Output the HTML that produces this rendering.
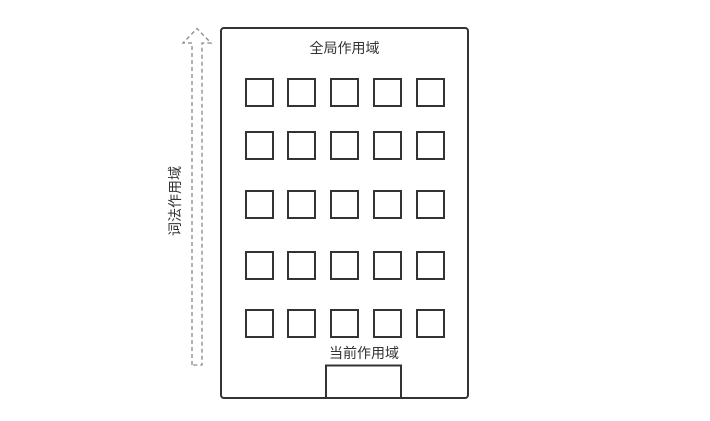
<!DOCTYPE html>
<html><head><meta charset="utf-8"><style>
html,body{margin:0;padding:0;background:#fff;width:710px;height:421px;overflow:hidden}
svg text{font-family:"Liberation Sans","Noto Sans CJK SC",sans-serif;font-size:14px;fill:#333}
</style></head><body>
<svg width="710" height="421" xmlns="http://www.w3.org/2000/svg">
<rect x="221" y="28" width="247" height="370" rx="3" fill="none" stroke="#333" stroke-width="2"/>
<text x="344.5" y="53" text-anchor="middle">全局作用域</text>
<g fill="none" stroke="#333" stroke-width="2">
<rect x="246" y="79" width="27" height="27"/><rect x="288" y="79" width="27" height="27"/><rect x="331" y="79" width="27" height="27"/><rect x="374" y="79" width="27" height="27"/><rect x="417" y="79" width="27" height="27"/>
<rect x="246" y="132" width="27" height="27"/><rect x="288" y="132" width="27" height="27"/><rect x="331" y="132" width="27" height="27"/><rect x="374" y="132" width="27" height="27"/><rect x="417" y="132" width="27" height="27"/>
<rect x="246" y="191" width="27" height="27"/><rect x="288" y="191" width="27" height="27"/><rect x="331" y="191" width="27" height="27"/><rect x="374" y="191" width="27" height="27"/><rect x="417" y="191" width="27" height="27"/>
<rect x="246" y="252" width="27" height="27"/><rect x="288" y="252" width="27" height="27"/><rect x="331" y="252" width="27" height="27"/><rect x="374" y="252" width="27" height="27"/><rect x="417" y="252" width="27" height="27"/>
<rect x="246" y="310" width="27" height="27"/><rect x="288" y="310" width="27" height="27"/><rect x="331" y="310" width="27" height="27"/><rect x="374" y="310" width="27" height="27"/><rect x="417" y="310" width="27" height="27"/>
<path d="M326 398 V365.5 H401 V398"/>
</g>
<text x="364" y="358" text-anchor="middle">当前作用域</text>
<path d="M192 365 V43 H183 L197 28.5 L211 43 H202 V365 Z" fill="none" stroke="#888" stroke-width="1.3" stroke-dasharray="4 3"/>
<text transform="translate(180,201) rotate(-90)" text-anchor="middle">词法作用域</text>
</svg>
</body></html>
